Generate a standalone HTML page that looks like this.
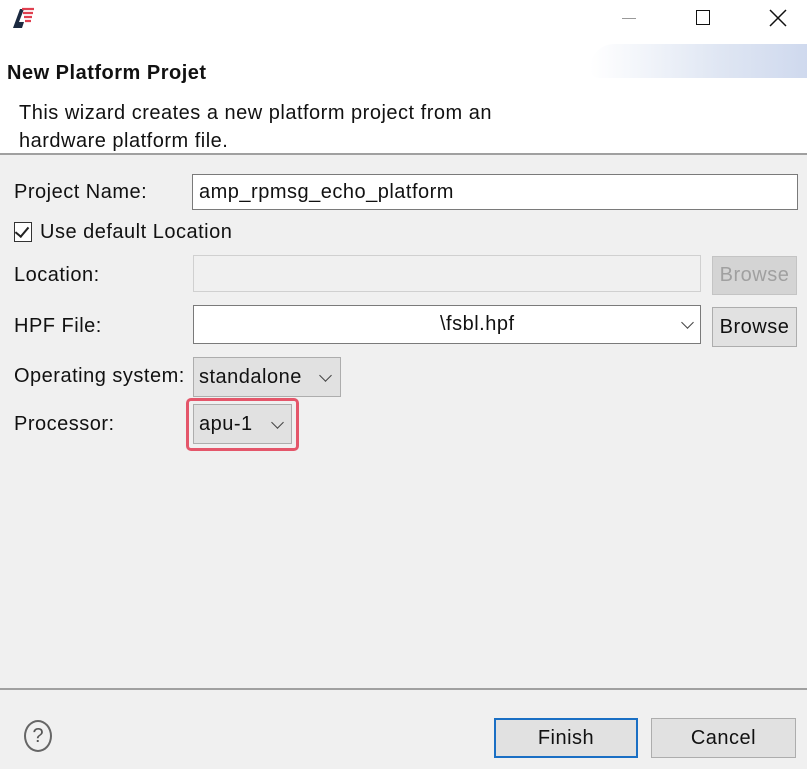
<!DOCTYPE html>
<html><head><style>
body{margin:0;width:807px;height:769px;background:#f0f0f0;position:relative;overflow:hidden;font-family:"Liberation Sans","Noto Sans CJK SC",sans-serif;color:#111;}
.a{position:absolute;}
.t{font-size:20px;letter-spacing:0.5px;white-space:nowrap;}
.in{position:absolute;background:#fff;border:1px solid #7a7a7a;box-sizing:border-box;}
.btn{position:absolute;background:#e1e1e1;border:1px solid #adadad;box-sizing:border-box;text-align:center;font-size:20px;letter-spacing:0.5px;}
.chev{position:absolute;width:8px;height:8px;border-right:1.5px solid #444;border-bottom:1.5px solid #444;transform:rotate(45deg);}
</style></head><body>
<div class="a" style="left:0;top:0;width:807px;height:154px;background:#fff"></div>
<div class="a" style="left:590px;top:44px;width:217px;height:34px;background:linear-gradient(90deg,#fff,#dfe6f3 60%,#cfd9ee);border-radius:100px 0 0 40px"></div>
<svg class="a" style="left:10px;top:5px" width="26" height="26"><path d="M3 23 L10 4 L14 4 L9 17 L14 17 L12 23Z" fill="#1b2a40"/><path d="M12 4h12M13 8h10M14 12h8M15 16h6" stroke="#e04050" stroke-width="2.2"/></svg>
<div class="a" style="left:622px;top:18px;width:14px;height:1px;background:#999"></div>
<div class="a" style="left:696px;top:10px;width:14px;height:15px;border:1.5px solid #111;box-sizing:border-box"></div>
<svg class="a" style="left:769px;top:9px" width="18" height="18"><path d="M1 1L17 17M17 1L1 17" stroke="#111" stroke-width="1.5"/></svg>
<div class="a t" style="left:7px;top:62px;font-weight:bold">New Platform Projet</div>
<div class="a t" style="left:19px;top:102px">This wizard creates a new platform project from an</div>
<div class="a t" style="left:19px;top:130px">hardware platform file.</div>
<div class="a" style="left:0;top:153px;width:807px;height:2px;background:#a0a0a0"></div>

<div class="a t" style="left:14px;top:181px">Project Name:</div>
<div class="in" style="left:192px;top:174px;width:606px;height:36px"><span class="t" style="position:absolute;left:6px;top:6px">amp_rpmsg_echo_platform</span></div>
<div class="a" style="left:14px;top:222px;width:18px;height:20px;border:1px solid #333;background:#fff;box-sizing:border-box"></div>
<div class="a" style="left:18px;top:224px;width:6px;height:11px;border-right:2px solid #222;border-bottom:2px solid #222;transform:rotate(40deg)"></div>
<div class="a t" style="left:40px;top:221px">Use default Location</div>
<div class="a t" style="left:14px;top:264px">Location:</div>
<div class="in" style="left:193px;top:255px;width:508px;height:37px;background:#f0f0f0;border-color:#d0d0d0"></div>
<div class="btn" style="left:712px;top:256px;width:85px;height:39px;color:#a0a0a0;background:#d4d4d4;border-color:#c4c4c4;line-height:37px">Browse</div>
<div class="a t" style="left:14px;top:315px">HPF File:</div>
<div class="in" style="left:193px;top:305px;width:508px;height:39px"><span class="t" style="position:absolute;left:246px;top:7px">\fsbl.hpf</span></div>
<div class="chev" style="left:683px;top:318px"></div>
<div class="btn" style="left:712px;top:307px;width:85px;height:40px;line-height:38px">Browse</div>
<div class="a t" style="left:14px;top:365px">Operating system:</div>
<div class="btn" style="left:193px;top:357px;width:148px;height:40px;text-align:left"><span class="t" style="position:absolute;left:5px;top:8px">standalone</span></div>
<div class="chev" style="left:321px;top:371px"></div>
<div class="a t" style="left:14px;top:413px">Processor:</div>
<div class="a" style="left:186px;top:398px;width:113px;height:53px;border:3px solid #e4566a;border-radius:5px;box-sizing:border-box"></div>
<div class="btn" style="left:193px;top:404px;width:99px;height:40px;text-align:left"><span class="t" style="position:absolute;left:5px;top:8px">apu-1</span></div>
<div class="chev" style="left:273px;top:418px"></div>

<div class="a" style="left:0;top:688px;width:807px;height:2px;background:#a0a0a0"></div>
<div class="a" style="left:24px;top:720px;width:28px;height:32px;border:2px solid #666;border-radius:50%;box-sizing:border-box;text-align:center;font-size:20px;line-height:28px;color:#555">?</div>
<div class="btn" style="left:494px;top:718px;width:144px;height:40px;border:2px solid #1a6fc4;line-height:36px">Finish</div>
<div class="btn" style="left:651px;top:718px;width:145px;height:40px;line-height:38px">Cancel</div>
</body></html>
